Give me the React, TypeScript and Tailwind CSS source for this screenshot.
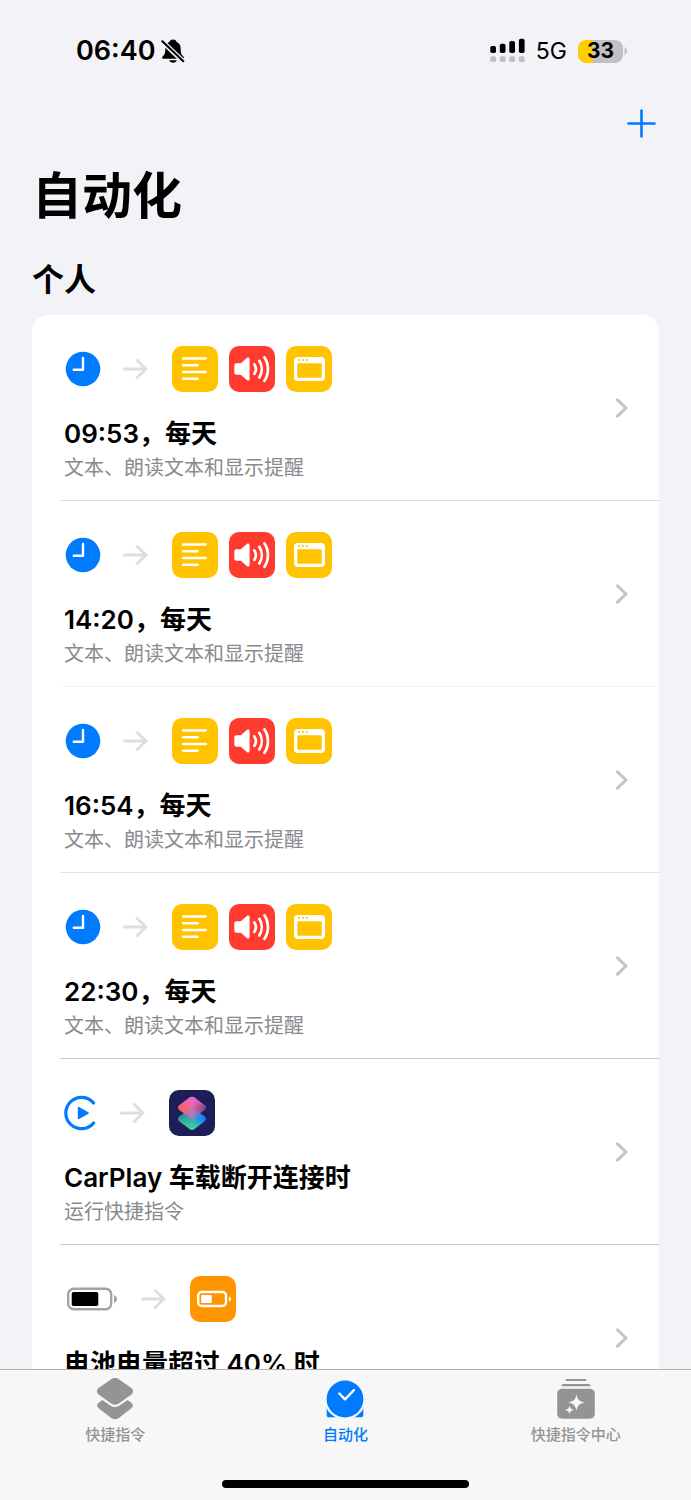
import React from 'react';

type Glyph = 'text' | 'speak' | 'alert' | 'shortcuts' | 'battery';
type Trigger = 'clock' | 'carplay' | 'battery';

interface Automation {
  trigger: Trigger;
  actions: Glyph[];
  title: string;
  subtitle?: string;
  divider: string;
}

const daily = {
  trigger: 'clock' as Trigger,
  actions: ['text', 'speak', 'alert'] as Glyph[],
  subtitle: '文本、朗读文本和显示提醒',
};

const AUTOMATIONS: Automation[] = [
  { ...daily, title: '09:53，每天', divider: 'border-[#dcdcde]' },
  { ...daily, title: '14:20，每天', divider: 'border-[#f4f4f5]' },
  { ...daily, title: '16:54，每天', divider: 'border-[#e2e2e4]' },
  { ...daily, title: '22:30，每天', divider: 'border-[#c8c8ca]' },
  { trigger: 'carplay', actions: ['shortcuts'], title: 'CarPlay 车载断开连接时', subtitle: '运行快捷指令', divider: 'border-[#c8c8ca]' },
  { trigger: 'battery', actions: ['battery'], title: '电池电量超过 40% 时', divider: 'border-[#dcdcde]' },
];

const TILE_COLORS: Record<Glyph, string> = {
  text: 'bg-[#ffc300]',
  speak: 'bg-[#ff3b30]',
  alert: 'bg-[#ffc300]',
  shortcuts: 'bg-[#1d1d58]',
  battery: 'bg-[#ff9500]',
};

const TriggerIcon: React.FC<{ kind: Trigger }> = ({ kind }) => {
  if (kind === 'clock') {
    return (
      <svg width="35" height="36" viewBox="0 0 35 36" fill="none" className="overflow-visible">
        <circle cx="19" cy="18" r="17.3" fill="#007aff" />
        <path d="M19 7v11.8H9.8" stroke="#fff" strokeWidth="2.4" strokeLinecap="round" strokeLinejoin="round" />
      </svg>
    );
  }
  if (kind === 'carplay') {
    return (
      <svg width="32" height="36" viewBox="0 0 32 36" fill="none">
        <path d="M29.6 8A15.700 15.700 0 1 0 29.600 28" stroke="#007aff" strokeWidth="3.2" strokeLinecap="round" />
        <path d="M14.6 12.6 24 18l-9.4 5.4Z" fill="#007aff" stroke="#007aff" strokeWidth="1.6" strokeLinejoin="round" />
      </svg>
    );
  }
  return (
    <svg width="53" height="24" viewBox="0 0 53 24" fill="none">
      <rect x="4.2" y="1.8" width="43" height="20.4" rx="5.5" stroke="#a3a3a3" strokeWidth="2.4" />
      <rect x="7.7" y="5" width="26.6" height="14" rx="1.8" fill="#000" />
      <path d="M50 8v8c1.9-.7 3-2.200 3-4s-1.100-3.300-3-4Z" fill="#a3a3a3" />
    </svg>
  );
};

const TOP_LAYER = 'M20.6 7.6a4 4 0 0 1 4.8 0l10.4 7.700a2.800 2.800 0 0 1 0 4.600l-10.400 7.700a4 4 0 0 1-4.800 0l-10.400-7.700a2.800 2.800 0 0 1 0-4.600Z';
const BOTTOM_LAYER = 'M20.6 18.9a4 4 0 0 1 4.8 0l10.4 7.700a2.800 2.800 0 0 1 0 4.600l-10.400 7.700a4 4 0 0 1-4.800 0l-10.400-7.700a2.800 2.800 0 0 1 0-4.600Z';

const ActionGlyph: React.FC<{ kind: Glyph }> = ({ kind }) => {
  switch (kind) {
    case 'text':
      return <path d="M11.2 12.5h22.4M11.2 19.2h14.4M11.2 26h22.400M11.200 32.800h14.400" stroke="#fff" strokeWidth="2.6" strokeLinecap="round" />;
    case 'speak':
      return (
        <>
          <path d="M7.5 17.3h4.3l6.3-5.5c1-.9 2.5-.3 2.5 1.200v20c0 1.500-1.500 2.100-2.500 1.200l-6.300-5.500H7.500c-1.400 0-2.200-.8-2.200-2.200v-7c0-1.400.8-2.200 2.200-2.200Z" fill="#fff" />
          <path d="M25.4 18.400c1.900 2.900 1.900 6.500 0 9.400M30.300 14.800c3.300 5 3.300 11.600 0 16.600M35.500 11.400c4.600 7 4.600 16.400 0 23.400" stroke="#fff" strokeWidth="2.7" strokeLinecap="round" />
        </>
      );
    case 'alert':
      return (
        <>
          <path fillRule="evenodd" d="M12 11h23a4 4 0 0 1 4 4v16a4 4 0 0 1-4 4H12a4 4 0 0 1-4-4V15a4 4 0 0 1 4-4Zm.3 6.300a1 1 0 0 0-1 1v12.400a1 1 0 0 0 1 1h22.400a1 1 0 0 0 1-1V18.300a1 1 0 0 0-1-1Z" fill="#fff" />
          <circle cx="13" cy="14" r="1.1" fill="#ffc300" />
          <circle cx="16.9" cy="14" r="1.1" fill="#ffc300" />
          <circle cx="20.8" cy="14" r="1.1" fill="#ffc300" />
        </>
      );
    case 'shortcuts':
      return (
        <>
          <defs>
            <linearGradient id="layer-top" x1="9" y1="17" x2="37" y2="17" gradientUnits="userSpaceOnUse">
              <stop offset="0" stopColor="#ff5a4d" />
              <stop offset="0.5" stopColor="#ec6a9c" />
              <stop offset="1" stopColor="#6a3f85" />
            </linearGradient>
            <linearGradient id="layer-tip" x1="23" y1="6" x2="23" y2="18" gradientUnits="userSpaceOnUse">
              <stop offset="0" stopColor="#f062d8" />
              <stop offset="1" stopColor="#f062d8" stopOpacity="0" />
            </linearGradient>
            <linearGradient id="layer-bottom" x1="10" y1="29" x2="36" y2="27" gradientUnits="userSpaceOnUse">
              <stop offset="0" stopColor="#2f8295" />
              <stop offset="0.55" stopColor="#3aa6c8" />
              <stop offset="1" stopColor="#0a7dff" />
            </linearGradient>
            <linearGradient id="layer-foot" x1="21" y1="41" x2="24" y2="28" gradientUnits="userSpaceOnUse">
              <stop offset="0" stopColor="#3fe08c" />
              <stop offset="1" stopColor="#3fe08c" stopOpacity="0" />
            </linearGradient>
          </defs>
          <path d={BOTTOM_LAYER} fill="url(#layer-bottom)" />
          <path d={BOTTOM_LAYER} fill="url(#layer-foot)" />
          <path d={TOP_LAYER} fill="url(#layer-top)" />
          <path d={TOP_LAYER} fill="url(#layer-tip)" />
          <path d="m23 17.1 8.6 6-6.2 4.500a4 4 0 0 1-4.800 0l-6.200-4.500Z" fill="#5f8fe8" opacity="0.35" />
        </>
      );
    case 'battery':
      return (
        <>
          <rect x="8.2" y="16" width="27.8" height="14" rx="3.5" stroke="#fff" strokeWidth="2.4" />
          <rect x="11.2" y="19" width="10.6" height="8" rx="1" fill="#fff" />
          <path d="M39 20.500v5c1.300-.5 2-1.400 2-2.500s-.7-2-2-2.500Z" fill="#fff" />
        </>
      );
  }
};

const ActionTile: React.FC<{ kind: Glyph }> = ({ kind }) => (
  <span className={`block size-[46px] rounded-[10px] ${TILE_COLORS[kind]}`}>
    <svg width="46" height="46" viewBox="0 0 46 46" fill="none">
      <ActionGlyph kind={kind} />
    </svg>
  </span>
);

const ArrowIcon = () => (
  <svg width="25" height="22" viewBox="0 0 25 22" fill="none" stroke="#dedede" strokeWidth="3" strokeLinecap="round" strokeLinejoin="round">
    <path d="M1.5 11H23M14.2 2.500 23 11l-8.800 8.500" />
  </svg>
);

const AutomationRow: React.FC<{ item: Automation }> = ({ item }) => (
  <li className={`ml-7 border-b ${item.divider}`}>
    <a href="#" className="flex min-h-[185px] items-center pl-1 pr-[31px]">
      <div className="flex-1 self-start pt-[31px]">
        <div className="flex h-[46px] items-center gap-6">
          <TriggerIcon kind={item.trigger} />
          <ArrowIcon />
          <div className="flex gap-[11px]">
            {item.actions.map((action) => (
              <ActionTile key={action} kind={action} />
            ))}
          </div>
        </div>
        <h3 className="mt-[25px] text-[26px] leading-[34px] font-semibold whitespace-nowrap">{item.title}</h3>
        {item.subtitle && <p className="text-[20px] leading-[34px] text-[#8a8a8e]">{item.subtitle}</p>}
      </div>
      <svg width="13" height="20" viewBox="0 0 13 20" fill="none" stroke="#c4c4c6" strokeWidth="3" strokeLinecap="round" strokeLinejoin="round">
        <path d="m2.500 1.800 8.500 8.200-8.500 8.200" />
      </svg>
    </a>
  </li>
);

const StatusBar = () => (
  <div className="flex h-[102px] items-center justify-between pl-[76px] pr-16">
    <div className="flex items-center gap-[6px]">
      <span className="text-[27px] leading-8 font-semibold">06:40</span>
      <svg width="24" height="24" viewBox="0 0 24 24">
        <path d="M12 .5c1.900 0 3 .9 3.400 2.300 3 1.200 4.300 3.900 4.300 7.200 0 4.600.8 5.600 2.500 7.300 1.300 1.300.8 2.500-.8 2.500H2.600c-1.600 0-2.100-1.200-.8-2.500 1.700-1.700 2.500-2.700 2.500-7.300 0-3.300 1.300-6 4.300-7.200C9 1.400 10.100.5 12 .5ZM8.200 21.200h7.600c-.4 1.500-1.900 2.500-3.800 2.500s-3.400-1-3.800-2.500Z" fill="#000" />
        <path d="M1 2.200 22.500 22.700" stroke="#f2f2f7" strokeWidth="5" />
        <path d="M1.300 2.200 22.300 22.200" stroke="#000" strokeWidth="2" strokeLinecap="round" />
      </svg>
    </div>
    <div className="flex items-center">
      <svg width="35" height="26" viewBox="0 0 35 26">
        <g fill="#000">
          <rect x="0.3" y="8" width="5.7" height="7" rx="1.8" />
          <rect x="9.8" y="5.8" width="5.7" height="9.2" rx="1.8" />
          <rect x="19.3" y="3" width="5.7" height="12" rx="1.8" />
          <rect x="28.9" y="0.8" width="5.7" height="14.2" rx="1.8" />
        </g>
        <g fill="#c0c0c5">
          <rect x="0.3" y="18.2" width="5.7" height="5.8" rx="1.6" />
          <rect x="9.8" y="18.2" width="5.7" height="5.8" rx="1.6" />
          <rect x="19.3" y="18.2" width="5.7" height="5.8" rx="1.6" />
          <rect x="28.9" y="18.2" width="5.7" height="5.8" rx="1.6" />
        </g>
      </svg>
      <span className="ml-[11px] text-[23px] leading-8">5G</span>
      <span className="ml-[11px] flex h-[23px] w-[45px] items-center justify-center rounded-[8px] bg-linear-to-r from-[#ffcc00] from-34% to-[#c0c0c5] to-34% text-[21px] leading-6 font-bold">
        33
      </span>
      <svg width="4" height="8" viewBox="0 0 4 8">
        <path d="M1.500 0v8C3 7.300 4 5.800 4 4S3 .7 1.500 0Z" fill="#c0c0c5" />
      </svg>
    </div>
  </div>
);

const DIAMOND = 'M16.2 1.2a6.5 6.5 0 0 1 7.6 0l12.6 8.900a4 4 0 0 1 0 6.500l-12.600 8.900a6.500 6.500 0 0 1-7.600 0L3.600 16.600a4 4 0 0 1 0-6.500Z';

const ShortcutsIcon = () => (
  <svg width="40" height="42" viewBox="0 0 40 42">
    <path d="M16.2 15.800a6.500 6.500 0 0 1 7.600 0l12.600 9a3.300 3.300 0 0 1 0 5.400l-12.600 9.800a6.500 6.500 0 0 1-7.600 0L3.600 30.200a3.300 3.300 0 0 1 0-5.400Z" fill="#949494" />
    <path d={DIAMOND} fill="#949494" stroke="#f7f7f8" strokeWidth="4.4" />
    <path d={DIAMOND} fill="#949494" />
  </svg>
);

const AutomationIcon = () => (
  <svg width="40" height="42" viewBox="0 0 40 42" fill="none">
    <path d="M1.700 28h36.600v9.300a2 2 0 0 1-2 2H3.700a2 2 0 0 1-2-2Z" fill="#007aff" />
    <circle cx="20" cy="21" r="20.6" fill="#f7f7f8" />
    <circle cx="20" cy="21" r="18.4" fill="#007aff" />
    <path d="m14.300 15.500 5.700 5.800 9-9.300" stroke="#fff" strokeWidth="2.4" strokeLinecap="round" strokeLinejoin="round" />
  </svg>
);

const GalleryIcon = () => (
  <svg width="40" height="42" viewBox="0 0 40 42">
    <path d="M11 .9h18a2 2 0 0 1 1.700 2H9.300A2 2 0 0 1 11 .9ZM7.500 6h25a2.500 2.500 0 0 1 2.300 2.200H5.200A2.500 2.500 0 0 1 7.500 6Z" fill="#949494" />
    <rect x="1.2" y="10.7" width="37.6" height="30" rx="5" fill="#949494" />
    <path d="M20.500 16.200c1 5.400 2.800 7.200 8.300 8.300-5.500 1.100-7.300 3-8.300 8.500-1-5.500-2.800-7.400-8.300-8.500 5.500-1.100 7.300-2.900 8.300-8.300ZM13.500 27.500c.6 2.900 1.500 3.800 4.300 4.400-2.800.6-3.700 1.500-4.300 4.400-.6-2.900-1.500-3.800-4.300-4.400 2.800-.6 3.700-1.500 4.300-4.400Z" fill="#f7f7f8" />
  </svg>
);

const TABS = [
  { label: '快捷指令', icon: <ShortcutsIcon />, active: false },
  { label: '自动化', icon: <AutomationIcon />, active: true },
  { label: '快捷指令中心', icon: <GalleryIcon />, active: false },
];

const App: React.FC = () => {
  return (
    <div className="flex h-screen flex-col overflow-hidden bg-[#f2f2f7] font-['Inter','Noto_Sans_CJK_SC',sans-serif] text-black" lang="zh-CN">
      <main className="min-h-0 flex-1 overflow-hidden">
        <StatusBar />

        <div className="flex h-[42px] items-center justify-end pr-[35px]">
          <button type="button" aria-label="+">
            <svg width="29" height="29" viewBox="0 0 29 29" stroke="#007aff" strokeWidth="2.6" strokeLinecap="round">
              <path d="M14.500 1.500v26M1.500 14.500h26" />
            </svg>
          </button>
        </div>

        <div className="px-8">
          <h1 className="mt-4 text-[50px] leading-[72px] font-bold">自动化</h1>
          <h2 className="mt-7 text-[32px] leading-10 font-semibold">个人</h2>
          <ul className="mt-[15px] overflow-hidden rounded-2xl bg-white">
            {AUTOMATIONS.map((item) => (
              <AutomationRow key={item.title} item={item} />
            ))}
          </ul>
        </div>
      </main>

      <footer className="border-t border-[#b2b2b5] bg-[#f7f7f8] pb-3">
        <nav className="grid grid-cols-3 pt-2">
          {TABS.map((tab) => (
            <button key={tab.label} type="button" className={`flex flex-col items-center ${tab.active ? 'text-[#007aff]' : 'text-[#949494]'}`}>
              {tab.icon}
              <span className="mt-1 text-[15px] leading-[22px] font-medium">{tab.label}</span>
            </button>
          ))}
        </nav>
        <div className="mx-auto mt-[34px] h-2 w-[247px] rounded-full bg-black" />
      </footer>
    </div>
  );
};

export default App;
